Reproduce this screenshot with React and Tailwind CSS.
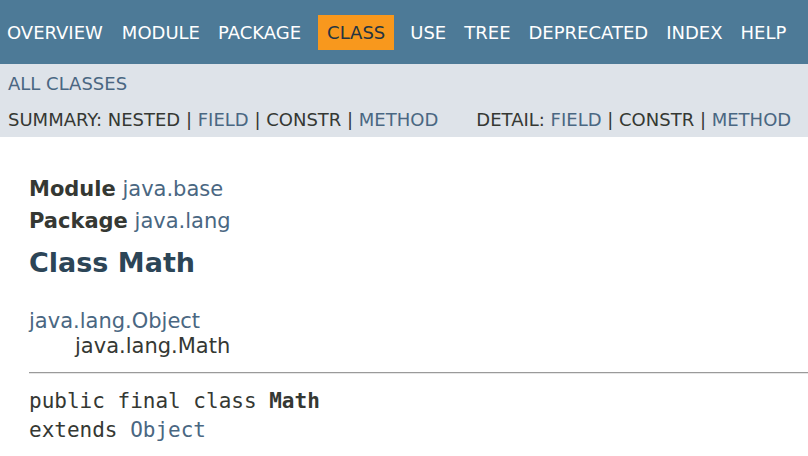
const navItems = ['OVERVIEW', 'MODULE', 'PACKAGE', 'CLASS', 'USE', 'TREE', 'DEPRECATED', 'INDEX', 'HELP']

function Sep() {
  return <span> | </span>
}

export default function App() {
  return (
    <div className="w-[808px] h-[456px] overflow-hidden bg-white text-[#353833] font-['DejaVu_Sans',sans-serif]">
      <div className="h-[64px] bg-[#4d7a97] flex items-start pt-[15px] text-[18px] text-white">
        <div className="flex -ml-[2px]">
          {navItems.map(item => (
            <div
              key={item}
              className={`h-[35px] px-[9px] flex items-center ${item === 'CLASS' ? 'ml-[8px] mr-[7px] bg-[#f8981d] text-[#253441]' : ''} ${item === 'OVERVIEW' ? 'pr-[10px]' : ''}`}
            >
              {item}
            </div>
          ))}
        </div>
      </div>

      <div className="h-[73px] bg-[#dee3e9] text-[18px] px-[8px] pt-[6px]">
        <div className="h-[27px] leading-[27px] text-[#4a6782]">ALL CLASSES</div>
        <div className="flex mt-[9px] leading-[27px] whitespace-pre">
          <div>
            SUMMARY: NESTED<Sep /><span className="text-[#4a6782]">FIELD</span><Sep />CONSTR<Sep />
            <span className="text-[#4a6782]">METHOD</span>
          </div>
          <div className="ml-[38px]">
            DETAIL: <span className="text-[#4a6782]">FIELD</span><Sep />CONSTR<Sep />
            <span className="text-[#4a6782]">METHOD</span>
          </div>
        </div>
      </div>

      <div className="pl-[29px] pt-[36px] text-[21px]">
        <div className="leading-[32px]">
          <span className="font-bold">Module</span> <span className="text-[#4a6782]">java.base</span>
        </div>
        <div className="leading-[32px]">
          <span className="font-bold">Package</span> <span className="text-[#4a6782]">java.lang</span>
        </div>
        <h1 className="mt-[8px] text-[27px] font-bold leading-[36px] text-[#2c4557]">Class Math</h1>

        <div className="mt-[28px] leading-[25px]">
          <div className="text-[#4a6782]">java.lang.Object</div>
          <div className="pl-[46px]">java.lang.Math</div>
        </div>

        <div className="mt-[13px] border-t border-t-[#9a9a9a] border-b border-b-[#e6e6e6]" />

        <div className="mt-[13px] font-['DejaVu_Sans_Mono',monospace] leading-[29px]">
          <div>
            public final class <span className="font-bold">Math</span>
          </div>
          <div>
            extends <span className="text-[#4a6782]">Object</span>
          </div>
        </div>
      </div>
    </div>
  )
}
